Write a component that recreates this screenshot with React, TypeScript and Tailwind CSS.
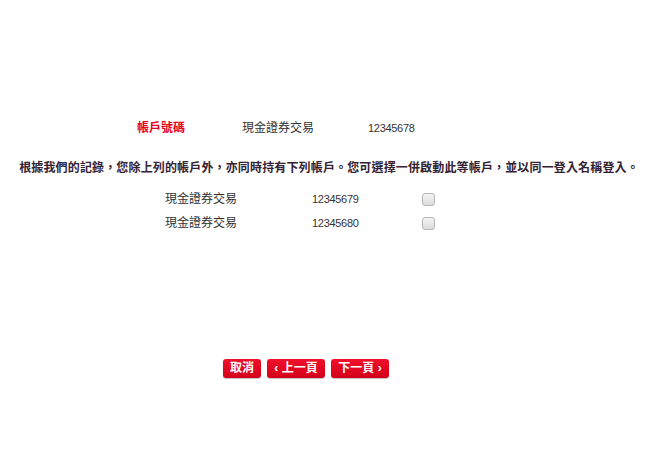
import React from "react"

function Checkbox() {
  return (
    <input
      type="checkbox"
      className="appearance-none w-[13px] h-[13px] rounded-[3px] border border-[#b5b5b5] bg-gradient-to-b from-[#f4f4f4] to-[#dcdcdc]"
    />
  )
}

function RedButton({ children, w }: { children: React.ReactNode; w: string }) {
  return (
    <button
      className={`${w} h-[19px] rounded-[3px] bg-gradient-to-b from-[#f0102a] to-[#d4001a] text-white text-[12px] font-bold leading-[19px] shadow-[0_1px_1px_rgba(0,0,0,0.25)]`}
    >
      {children}
    </button>
  )
}

export default function App() {
  const accounts = [
    { type: "現金證券交易", no: "12345679" },
    { type: "現金證券交易", no: "12345680" },
  ]

  return (
    <div
      className="w-[650px] h-[462px] bg-white text-[12px] text-[#333]"
      style={{ fontFamily: '"Liberation Sans", "Noto Sans CJK TC", sans-serif' }}
    >
      <div className="pt-[120px] flex items-center h-[136px]">
        <span className="ml-[137px] w-[105px] font-bold text-[#e60020]">帳戶號碼</span>
        <span className="w-[126px]">現金證券交易</span>
        <span className="text-[11px] tracking-[-0.3px]">12345678</span>
      </div>

      <p className="mt-[23px] text-center font-bold text-[#332233] tracking-[0.15px] pl-[8px]">
        根據我們的記錄，您除上列的帳戶外，亦同時持有下列帳戶。您可選擇一併啟動此等帳戶，並以同一登入名稱登入。
      </p>

      <div className="mt-[13px] flex flex-col gap-[6px]">
        {accounts.map((a, i) => (
          <div key={i} className="flex items-center h-[18px]">
            <span className="ml-[165px] w-[147px]">{a.type}</span>
            <span className="w-[110px] text-[11px] tracking-[-0.3px]">{a.no}</span>
            <Checkbox />
          </div>
        ))}
      </div>

      <div className="mt-[127px] ml-[223px] flex gap-[6px]">
        <RedButton w="w-[38px]">取消</RedButton>
        <RedButton w="w-[58px]">‹ 上一頁</RedButton>
        <RedButton w="w-[58px]">下一頁 ›</RedButton>
      </div>
    </div>
  )
}
